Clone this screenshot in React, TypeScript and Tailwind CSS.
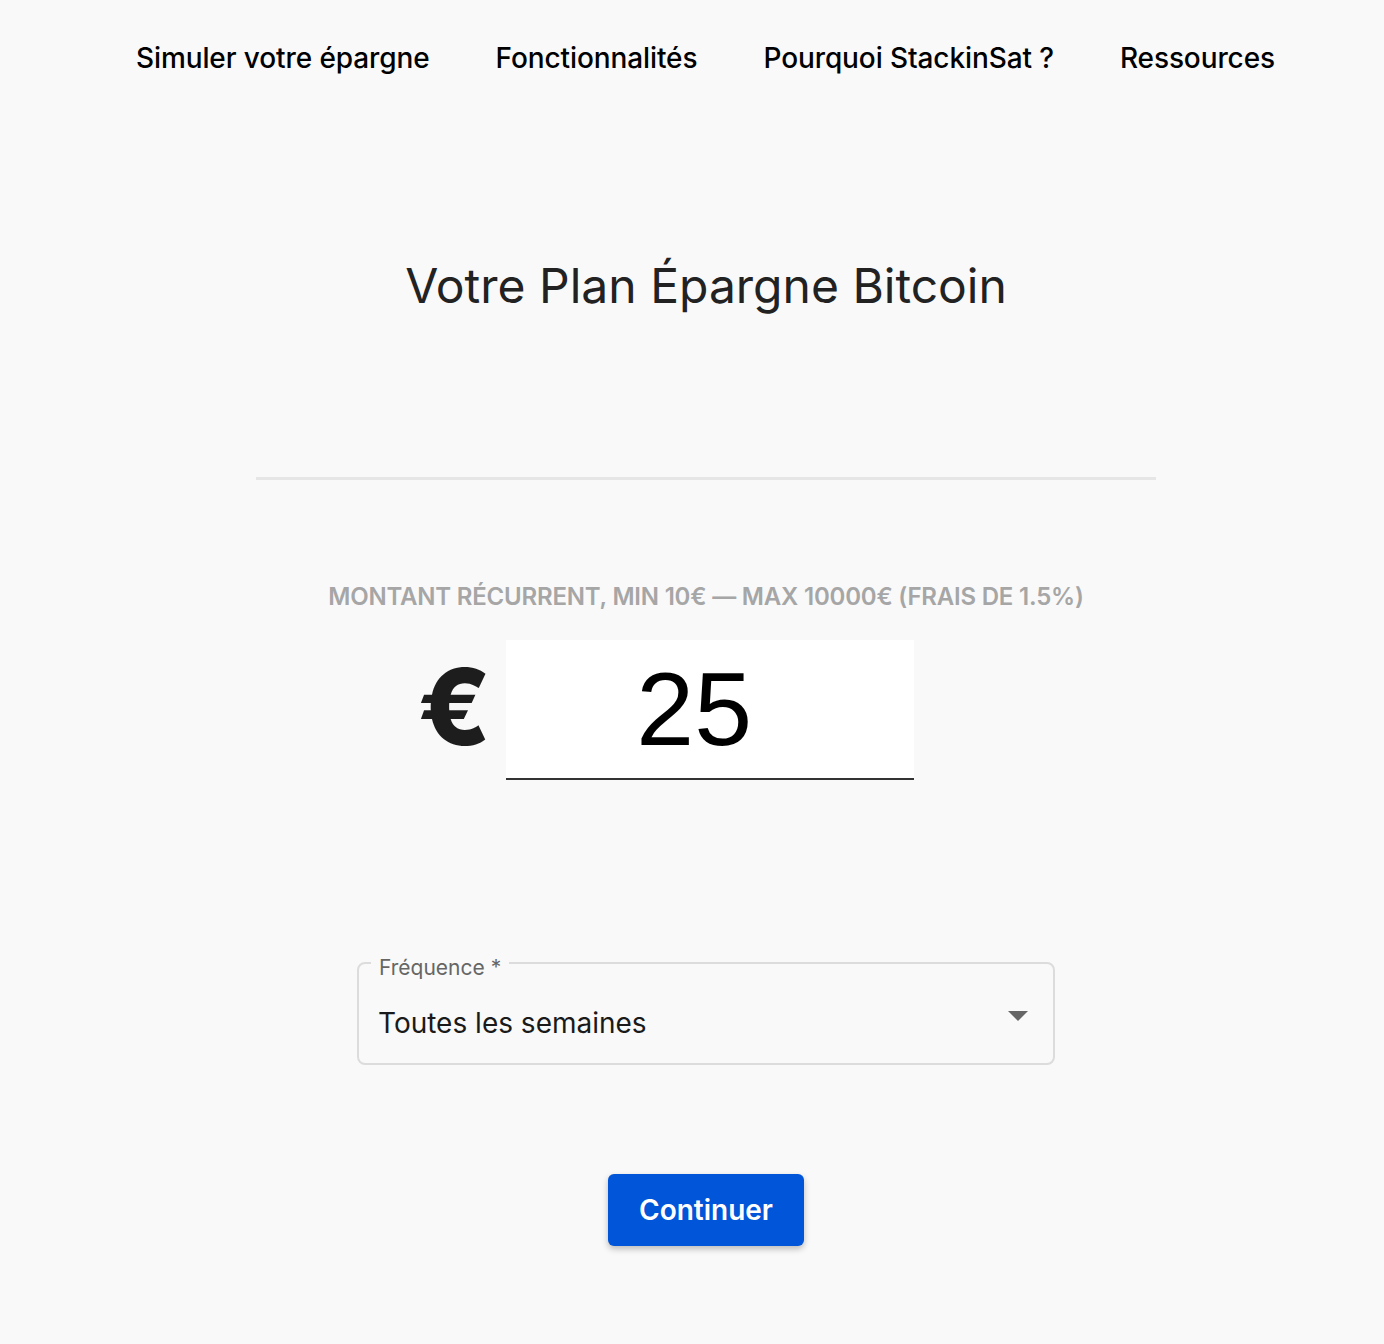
import { useState } from "react";

const navLinks = [
  "Simuler votre épargne",
  "Fonctionnalités",
  "Pourquoi StackinSat ?",
  "Ressources",
];

export default function App() {
  const [amount, setAmount] = useState<string>("25");

  return (
    <div className="min-h-[1344px] bg-[#f9f9f9] font-['Inter',sans-serif] text-[#111]">
      <nav className="flex justify-end gap-[66px] pr-[109px] pt-[38px]">
        {navLinks.map((link) => (
          <a key={link} className="text-[28px] font-medium leading-[40px] tracking-[-0.1px] text-black">
            {link}
          </a>
        ))}
      </nav>

      <main className="flex flex-col items-center pl-[28px]">
        <h1 className="mt-[179px] text-[48px] leading-[58px] font-normal text-[#222]">
          Votre Plan Épargne Bitcoin
        </h1>

        <hr className="mt-[162px] w-[900px] border-0 h-[3px] bg-[#e6e6e6]" />

        <p className="mt-[101px] text-[24px] font-semibold uppercase leading-[32px] tracking-[-0.2px] text-[#a6a6a6]">
          Montant récurrent, min 10€ — max 10000€ (frais de 1.5%)
        </p>

        <div className="mt-[27px] flex items-center pr-[80px]">
          <span className="mr-[15px] -mt-[6px] text-[106px] font-extrabold leading-none text-[#1d1d1d]">
            €
          </span>
          <input
            value={amount}
            onChange={(e) => setAmount(e.target.value)}
            className="w-[408px] h-[140px] bg-white border-b-2 border-[#333] pr-[32px] text-center text-[104px] font-['Liberation_Sans',sans-serif] text-black outline-none"
          />
        </div>

        <div className="relative mt-[182px] w-[698px] h-[103px] rounded-[8px] border-2 border-[#dcdcdc]">
          <span className="absolute -top-[10px] left-[12px] bg-[#f9f9f9] px-[8px] text-[21px] leading-[28px] text-[#666]">
            Fréquence *
          </span>
          <div className="flex h-full items-center justify-between pl-[19px] pr-[25px] pt-[19px]">
            <span className="text-[28px] leading-[36px] text-[#1a1a1a]">Toutes les semaines</span>
            <svg width="20" height="10" viewBox="0 0 20 10" className="relative -top-[7px]">
              <path d="M0 0 L20 0 L10 10 Z" fill="#666" />
            </svg>
          </div>
        </div>

        <button className="mt-[109px] w-[196px] h-[72px] rounded-[6px] bg-[#0055d9] text-[28px] font-semibold text-white shadow-[0_3px_6px_rgba(0,0,0,0.25)]">
          Continuer
        </button>
      </main>
    </div>
  );
}
